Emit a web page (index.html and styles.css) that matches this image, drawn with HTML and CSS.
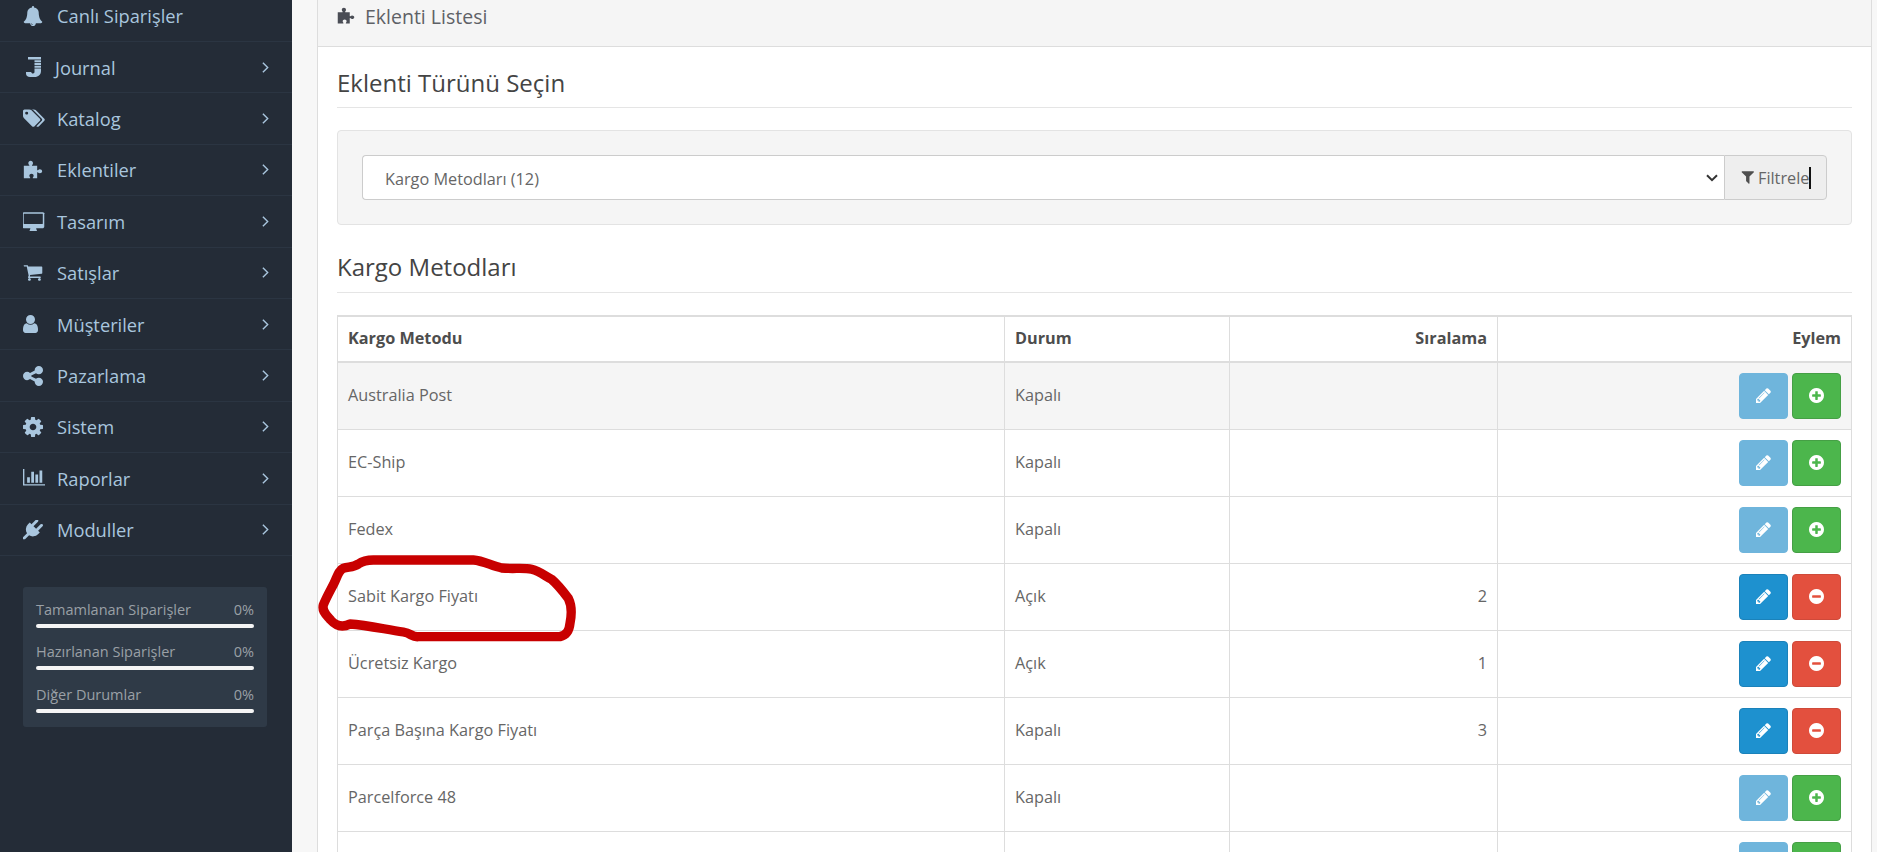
FILE: index.html
```html
<!DOCTYPE html>
<html lang="tr">
<head>
<meta charset="utf-8">
<title>Eklenti Listesi</title>
<link rel="stylesheet" href="styles.css">
</head>
<body>
<svg width="0" height="0" class="defs">
  <symbol id="i-pencil" viewBox="256 128 1280 1536"><path d="M491 1536l91-91-235-235-91 91v107h128v128h107zm523-928q0-22-22-22-10 0-17 7l-542 542q-7 7-7 17 0 22 22 22 10 0 17-7l542-542q7-7 7-17zm-54-192l416 416-832 832h-416v-416zm683 96q0 53-37 90l-166 166-416-416 166-165q36-38 90-38 53 0 91 38l235 234q37 39 37 91z"/></symbol>
  <symbol id="i-plus" viewBox="128 128 1536 1536"><path d="M1344 960v-128q0-26-19-45t-45-19h-256v-256q0-26-19-45t-45-19h-128q-26 0-45 19t-19 45v256h-256q-26 0-45 19t-19 45v128q0 26 19 45t45 19h256v256q0 26 19 45t45 19h128q26 0 45-19t19-45v-256h256q26 0 45-19t19-45zm320-64q0 209-103 385.5t-279.5 279.5-385.5 103-385.5-103-279.5-279.5-103-385.5 103-385.5 279.5-279.5 385.5-103 385.5 103 279.5 279.5 103 385.5z"/></symbol>
  <symbol id="i-minus" viewBox="128 128 1536 1536"><path d="M1344 960v-128q0-26-19-45t-45-19h-768q-26 0-45 19t-19 45v128q0 26 19 45t45 19h768q26 0 45-19t19-45zm320-64q0 209-103 385.5t-279.5 279.5-385.5 103-385.5-103-279.5-279.5-103-385.5 103-385.5 279.5-279.5 385.5-103 385.5 103 279.5 279.5 103 385.5z"/></symbol>
  <symbol id="i-puzzle" viewBox="0 0 24 24"><path fill-rule="evenodd" d="M1 7h6.200c.5 0 .6-.5.2-1-.6-.7-1-1.300-1-2.200C6.400 2.200 7.600 1 9.200 1s2.800 1.200 2.800 2.800c0 .9-.4 1.500-1 2.200-.4.500-.3 1 .2 1H17v5c0 .5.5.6 1 .2.700-.6 1.300-1 2.200-1 1.500 0 2.800 1 2.800 2.400s-1.300 2.400-2.800 2.400c-.9 0-1.500-.4-2.200-1-.5-.4-1-.3-1 .2V22h-4.800c-.6 0-.7-.5-.3-1 .6-.7.9-1.200.9-2 0-1.500-1.100-2.500-2.600-2.500S7.600 17.500 7.600 19c0 .8.300 1.300.9 2 .4.500.3 1-.3 1H1z"/></symbol>
</svg>

<aside class="sidebar">
  <ul class="menu">
    <li class="menu-item"><svg class="mi" viewBox="64 0 1664 1792"><path d="M912 1696q0-16-16-16-59 0-101.500-42.500t-42.500-101.500q0-16-16-16t-16 16q0 73 51.500 124.500t124.500 51.500q16 0 16-16zm816-288q0 52-38 90t-90 38h-448q0 106-75 181t-181 75-181-75-75-181h-448q-52 0-90-38t-38-90q50-42 91-88t85-119.500 74.500-158.500 50-206 19.500-260q0-152 117-282.500t307-158.500q-8-19-8-39 0-40 28-68t68-28 68 28 28 68q0 20-8 39 190 28 307 158.500t117 282.500q0 139 19.500 260t50 206 74.500 158.500 85 119.500 91 88z"/></svg><span class="ml">Canlı Siparişler</span></li>
    <li class="menu-item journal"><svg class="mi mi-j" viewBox="0 0 15 20"><path d="M2 0h13v2.600H2zM8.500 3.300H15v2H8.500zM8.500 6H15v2H8.500zM8.500 8.700H15v2H8.500zM8.500 11.400H15V14c0 3.600-2.500 6-6.500 6H4C1.500 20 0 18.500 0 16.500V15h5.200c0 .8.800 1.500 1.800 1.500 1 0 1.500-.7 1.500-1.700z"/></svg><span class="ml">Journal</span><svg class="chev" viewBox="0 0 8 14"><path d="M1 1.500 6.500 7 1 12.500"/></svg></li>
    <li class="menu-item"><svg class="mi mi-wide" viewBox="0 256 1920 1408"><path d="M448 448q0-53-37.500-90.500t-90.500-37.500-90.500 37.500-37.500 90.500 37.500 90.500 90.500 37.500 90.500-37.500 37.500-90.500zm1067 576q0 53-37 90l-491 492q-39 37-91 37-53 0-90-37l-715-716q-38-37-64.500-101t-26.500-117v-416q0-52 38-90t90-38h416q53 0 117 26.500t102 64.500l715 714q37 39 37 91zm384 0q0 53-37 90l-491 492q-39 37-91 37-36 0-59-14t-53-45l470-470q37-37 37-90 0-52-37-91l-715-714q-38-38-102-64.500t-117-26.500h224q53 0 117 26.500t102 64.500l715 714q37 39 37 91z"/></svg><span class="ml">Katalog</span><svg class="chev" viewBox="0 0 8 14"><path d="M1 1.500 6.500 7 1 12.500"/></svg></li>
    <li class="menu-item"><svg class="mi"><use href="#i-puzzle"/></svg><span class="ml">Eklentiler</span><svg class="chev" viewBox="0 0 8 14"><path d="M1 1.500 6.500 7 1 12.500"/></svg></li>
    <li class="menu-item"><svg class="mi mi-wide" viewBox="0 128 1920 1536"><path fill-rule="evenodd" d="M1728 992v-832q0-13-9.500-22.500t-22.500-9.500h-1600q-13 0-22.500 9.500t-9.500 22.500v832q0 13 9.500 22.500t22.500 9.500h1600q13 0 22.500-9.500t9.500-22.500zm128-832v1088q0 66-47 113t-113 47h-544q0 37 16 77.500t32 71 16 43.500q0 26-19 45t-45 19h-512q-26 0-45-19t-19-45q0-14 16-44t32-70 16-78h-544q-66 0-113-47t-47-113v-1088q0-66 47-113t113-47h1632q66 0 113 47t47 113z" transform="translate(0 128)"/></svg><span class="ml">Tasarım</span><svg class="chev" viewBox="0 0 8 14"><path d="M1 1.500 6.500 7 1 12.500"/></svg></li>
    <li class="menu-item"><svg class="mi" viewBox="0 256 1792 1408"><path d="M704 1536q0 52-38 90t-90 38-90-38-38-90 38-90 90-38 90 38 38 90zm896 0q0 52-38 90t-90 38-90-38-38-90 38-90 90-38 90 38 38 90zm128-1088v512q0 24-16.500 42.500t-40.500 21.500l-1044 122q13 60 13 70 0 16-24 64h920q26 0 45 19t19 45-19 45-45 19h-1024q-26 0-45-19t-19-45q0-11 8-31.500t16-36 21.500-40 15.500-29.500l-177-823h-204q-26 0-45-19t-19-45 19-45 45-19h256q16 0 28.500 6.500t19.500 15.500 13 24.500 8 26 5.500 29.500 4.500 26h1201q26 0 45 19t19 45z"/></svg><span class="ml">Satışlar</span><svg class="chev" viewBox="0 0 8 14"><path d="M1 1.500 6.500 7 1 12.500"/></svg></li>
    <li class="menu-item"><svg class="mi mi-user" viewBox="256 128 1280 1536"><path d="M1536 1399q0 109-62.500 187t-150.500 78h-854q-88 0-150.500-78t-62.500-187q0-85 8.500-160.500t31.500-152 58.500-131 94-89 134.500-34.500q131 128 313 128t313-128q76 0 134.500 34.500t94 89 58.500 131 31.500 152 8.500 160.500zm-256-887q0 159-112.500 271.500t-271.500 112.500-271.500-112.500-112.500-271.500 112.500-271.500 271.500-112.500 271.500 112.500 112.500 271.500z"/></svg><span class="ml">Müşteriler</span><svg class="chev" viewBox="0 0 8 14"><path d="M1 1.500 6.500 7 1 12.500"/></svg></li>
    <li class="menu-item"><svg class="mi" viewBox="128 128 1536 1536"><path d="M1344 1024q133 0 226.500 93.500t93.500 226.500-93.500 226.500-226.500 93.500-226.500-93.500-93.500-226.500q0-12 2-34l-360-180q-92 86-218 86-133 0-226.500-93.500t-93.500-226.500 93.500-226.500 226.500-93.500q126 0 218 86l360-180q-2-22-2-34 0-133 93.500-226.500t226.500-93.500 226.500 93.500 93.500 226.500-93.500 226.500-226.500 93.500q-126 0-218-86l-360 180q2 22 2 34t-2 34l360 180q92-86 218-86z"/></svg><span class="ml">Pazarlama</span><svg class="chev" viewBox="0 0 8 14"><path d="M1 1.500 6.500 7 1 12.500"/></svg></li>
    <li class="menu-item"><svg class="mi" viewBox="128 128 1536 1536"><path d="M1152 896q0-106-75-181t-181-75-181 75-75 181 75 181 181 75 181-75 75-181zm512-109v222q0 12-8 23t-20 13l-185 28q-19 54-39 91 35 50 107 138 10 12 10 25t-9 23q-27 37-99 108t-94 71q-12 0-26-9l-138-108q-44 23-91 38-16 136-29 186-7 28-36 28h-222q-14 0-24.500-8.500t-11.500-21.500l-28-184q-49-16-90-37l-141 107q-10 9-25 9-14 0-25-11-126-114-165-168-7-10-7-23 0-12 8-23 15-21 51-66.500t54-70.500q-27-50-41-99l-183-27q-13-2-21-12.500t-8-23.500v-222q0-12 8-23t19-13l186-28q14-46 39-92-40-57-107-138-10-12-10-24 0-10 9-23 26-36 98.500-107.500t94.500-71.500q13 0 26 10l138 107q44-23 91-38 16-136 29-186 7-28 36-28h222q14 0 24.500 8.500t11.500 21.500l28 184q49 16 90 37l142-107q9-9 24-9 13 0 25 10 129 119 165 170 7 8 7 22 0 12-8 23-15 21-51 66.500t-54 70.500q26 50 41 98l183 28q13 2 21 12.500t8 23.500z"/></svg><span class="ml">Sistem</span><svg class="chev" viewBox="0 0 8 14"><path d="M1 1.500 6.500 7 1 12.500"/></svg></li>
    <li class="menu-item"><svg class="mi mi-wide" viewBox="0 256 2048 1408"><path d="M640 896v512h-256v-512h256zm384-512v1024h-256v-1024h256zm1024 1152v128h-2048v-1536h128v1408h1920zm-640-896v768h-256v-768h256zm384-384v1152h-256v-1152h256z"/></svg><span class="ml">Raporlar</span><svg class="chev" viewBox="0 0 8 14"><path d="M1 1.500 6.500 7 1 12.500"/></svg></li>
    <li class="menu-item"><svg class="mi" viewBox="0 128 1792 1664"><path d="M1755 453q37 38 37 90.500t-37 90.500l-401 400 150 150-160 160q-163 163-389.500 186.500t-411.500-100.500l-362 362h-181v-181l362-362q-124-185-100.500-411.500t186.500-389.500l160-160 150 150 400-401q38-37 91-37t90 37 37 90.500-37 90.500l-400 401 234 234 401-400q38-37 91-37t90 37z"/></svg><span class="ml">Moduller</span><svg class="chev" viewBox="0 0 8 14"><path d="M1 1.500 6.500 7 1 12.500"/></svg></li>
  </ul>
  <div class="stats">
    <div class="stat"><div class="stat-head"><span>Tamamlanan Siparişler</span><span>0%</span></div><div class="bar"></div></div>
    <div class="stat"><div class="stat-head"><span>Hazırlanan Siparişler</span><span>0%</span></div><div class="bar"></div></div>
    <div class="stat"><div class="stat-head"><span>Diğer Durumlar</span><span>0%</span></div><div class="bar"></div></div>
  </div>
</aside>

<main class="content">
  <section class="panel">
    <header class="panel-head"><svg class="ph-icon"><use href="#i-puzzle"/></svg><span>Eklenti Listesi</span></header>
    <div class="panel-body">
      <h2 class="section-title">Eklenti Türünü Seçin</h2>
      <div class="well">
        <div class="input-group">
          <div class="select-wrap">
            <select class="form-select"><option>Kargo Metodları (12)</option></select>
            <svg class="select-arrow" viewBox="0 0 12 8"><path d="M1 1.200 6 6.200 11 1.200"/></svg>
          </div>
          <button class="filter-btn" type="button"><svg class="f-icon" viewBox="128 256 1472 1408"><path d="M1595 295q17 41-14 70l-493 493v742q0 42-39 59-13 5-25 5-27 0-45-19l-256-256q-19-19-19-45v-486l-493-493q-31-29-14-70 17-39 59-39h1280q42 0 59 39z"/></svg><span>Filtrele</span><i class="caret"></i></button>
        </div>
      </div>
      <h2 class="section-title second">Kargo Metodları</h2>
      <table class="list">
        <colgroup><col class="c1"><col class="c2"><col class="c3"><col></colgroup>
        <thead><tr><th>Kargo Metodu</th><th>Durum</th><th class="r">Sıralama</th><th class="r">Eylem</th></tr></thead>
        <tbody>
          <tr class="hover"><td>Australia Post</td><td>Kapalı</td><td class="r"></td><td class="r act"><span class="acts"><a class="btn edit off"><svg><use href="#i-pencil"/></svg></a><a class="btn add"><svg><use href="#i-plus"/></svg></a></span></td></tr>
          <tr><td>EC-Ship</td><td>Kapalı</td><td class="r"></td><td class="r act"><span class="acts"><a class="btn edit off"><svg><use href="#i-pencil"/></svg></a><a class="btn add"><svg><use href="#i-plus"/></svg></a></span></td></tr>
          <tr><td>Fedex</td><td>Kapalı</td><td class="r"></td><td class="r act"><span class="acts"><a class="btn edit off"><svg><use href="#i-pencil"/></svg></a><a class="btn add"><svg><use href="#i-plus"/></svg></a></span></td></tr>
          <tr><td>Sabit Kargo Fiyatı</td><td>Açık</td><td class="r">2</td><td class="r act"><span class="acts"><a class="btn edit"><svg><use href="#i-pencil"/></svg></a><a class="btn del"><svg><use href="#i-minus"/></svg></a></span></td></tr>
          <tr><td>Ücretsiz Kargo</td><td>Açık</td><td class="r">1</td><td class="r act"><span class="acts"><a class="btn edit"><svg><use href="#i-pencil"/></svg></a><a class="btn del"><svg><use href="#i-minus"/></svg></a></span></td></tr>
          <tr><td>Parça Başına Kargo Fiyatı</td><td>Kapalı</td><td class="r">3</td><td class="r act"><span class="acts"><a class="btn edit"><svg><use href="#i-pencil"/></svg></a><a class="btn del"><svg><use href="#i-minus"/></svg></a></span></td></tr>
          <tr><td>Parcelforce 48</td><td>Kapalı</td><td class="r"></td><td class="r act"><span class="acts"><a class="btn edit off"><svg><use href="#i-pencil"/></svg></a><a class="btn add"><svg><use href="#i-plus"/></svg></a></span></td></tr>
          <tr><td></td><td></td><td class="r"></td><td class="r act"><span class="acts"><a class="btn edit off"><svg><use href="#i-pencil"/></svg></a><a class="btn add"><svg><use href="#i-plus"/></svg></a></span></td></tr>
        </tbody>
      </table>
    </div>
  </section>
</main>

<svg class="scribble" viewBox="0 0 900 390"><path d="M40 195C50 170 62 150 72 130 82 110 85 92 100 85 118 80 130 82 145 72 155 65 170 60 190 60H490C520 62 545 78 575 84 610 88 640 82 665 88 690 94 705 108 725 118 745 135 760 155 775 175 785 195 785 225 780 250 778 270 772 285 750 290H325C305 292 305 280 280 276 225 268 170 255 120 252 100 262 80 260 62 240 50 225 35 215 40 195Z"/></svg>
</body>
</html>
```
FILE: styles.css
```css
* { box-sizing: border-box; }
html, body { margin: 0; height: 852px; overflow: hidden; }
body {
  display: flex;
  position: relative;
  background: #f7f7f7;
  font-family: "Open Sans", "Noto Sans", sans-serif;
  font-size: 16.25px;
  color: #666;
}
.defs { position: absolute; }

/* Sidebar */
.sidebar { flex: 0 0 292px; height: 852px; background: #242c37; overflow: hidden; }
.menu { list-style: none; margin: -9.4px 0 0; padding: 0; }
.menu-item {
  display: flex;
  align-items: center;
  height: 51.4px;
  padding: 0 23px;
  border-bottom: 1px solid #2b3542;
  color: #a9c6de;
  font-size: 18.3px;
  fill: currentColor;
}
.mi { flex: 0 0 auto; width: 20px; height: 20px; margin-right: 14px; }
.mi-wide { width: 22px; margin-right: 12px; }
.mi-user { width: 15px; margin-right: 19px; }
.mi-j { width: 15px; height: 20px; margin-left: 3px; margin-right: 14px; }
.ml { flex: 1; }
.chev { width: 7px; height: 13px; fill: none; stroke: currentColor; stroke-width: 1.600; }

.stats {
  margin: 31px 25px 0 23px;
  padding: 13px 13px 14px;
  background: #2f3a47;
  border-radius: 3px;
  color: #9aa0a6;
  font-size: 14.5px;
}
.stat + .stat { margin-top: 14.500px; }
.stat-head { display: flex; justify-content: space-between; line-height: 19px; }
.bar { height: 4px; margin-top: 5px; background: #f5f5f5; border-radius: 2px; }

/* Content */
.content { flex: 1; padding: 0 5px 0 25px; min-width: 0; }
.panel { margin-top: -12px; background: #fff; border: 1px solid #ddd; border-top: 0; }
.panel-head {
  display: flex;
  align-items: center;
  height: 59px;
  padding: 0 19px 2px;
  background: #f5f5f5;
  border-bottom: 1px solid #ddd;
  color: #5e6166;
  font-size: 19.5px;
}
.ph-icon { width: 18px; height: 18px; margin-right: 10px; fill: #4a4d55; }
.panel-body { padding: 0 19px 20px; }
.section-title {
  margin: 0;
  padding: 19px 0 7px;
  height: 61px;
  border-bottom: 1px solid #e5e5e5;
  font-size: 24px;
  line-height: 33px;
  font-weight: 400;
  color: #444;
}
.section-title.second { height: 68px; padding-top: 25px; }

.well {
  margin-top: 22px;
  height: 95px;
  padding: 24px;
  background: #f5f5f5;
  border: 1px solid #e3e3e3;
  border-radius: 4px;
}
.input-group { display: flex; height: 45px; }
.select-wrap { position: relative; flex: 1; min-width: 0; }
.form-select {
  width: 100%;
  height: 100%;
  padding: 2px 22px 0;
  appearance: none;
  background-color: #fff;
  border: 1px solid #ccc;
  border-right: 0;
  border-radius: 4px 0 0 4px;
  font: inherit;
  color: #666;
}
.select-arrow {
  position: absolute;
  right: 6px;
  top: 19px;
  width: 12px;
  height: 8px;
  fill: none;
  stroke: #333;
  stroke-width: 2;
}
.filter-btn {
  flex: 0 0 103px;
  position: relative;
  display: flex;
  align-items: center;
  gap: 4px;
  padding: 0 0 0 16px;
  background: #eee;
  border: 1px solid #ccc;
  border-radius: 0 4px 4px 0;
  font: inherit;
  color: #666;
}
.f-icon { width: 13px; height: 13px; fill: #4f4f4f; }
.caret { position: absolute; left: 84px; top: 11px; width: 1.500px; height: 22px; background: #111; }

.list { width: 100%; margin-top: 22px; border-collapse: collapse; table-layout: fixed; border: 1px solid #ddd; }
.c1 { width: 667px; }
.c2 { width: 225px; }
.c3 { width: 268px; }
.list th, .list td { padding: 0 10px 2px; border: 1px solid #ddd; text-align: left; }
.list th { height: 46px; border-top: 2px solid #ddd; border-bottom: 2px solid #ddd; font-weight: 700; color: #4d4d4d; }
.list td { height: 67px; }
.list td.act { padding-bottom: 0; }
.list .r { text-align: right; }
.hover td { background: #f5f5f5; }

.acts { display: inline-flex; gap: 4px; vertical-align: middle; }
.btn {
  display: flex;
  align-items: center;
  justify-content: center;
  width: 49px;
  height: 46px;
  border: 1px solid;
  border-radius: 4px;
  fill: #fff;
}
.btn svg { width: 15px; height: 15px; }
.edit { background: #1e91cf; border-color: #1b82ba; }
.edit.off { background: #6fb5dc; border-color: #6fb5dc; }
.add { background: #4cb64c; border-color: #459f45; }
.del { background: #e3503e; border-color: #cf4a3a; }

.scribble {
  position: absolute;
  left: 310px;
  top: 540px;
  width: 300px;
  height: 130px;
  fill: none;
  stroke: #c80000;
  stroke-width: 28;
  stroke-linejoin: round;
}
```
